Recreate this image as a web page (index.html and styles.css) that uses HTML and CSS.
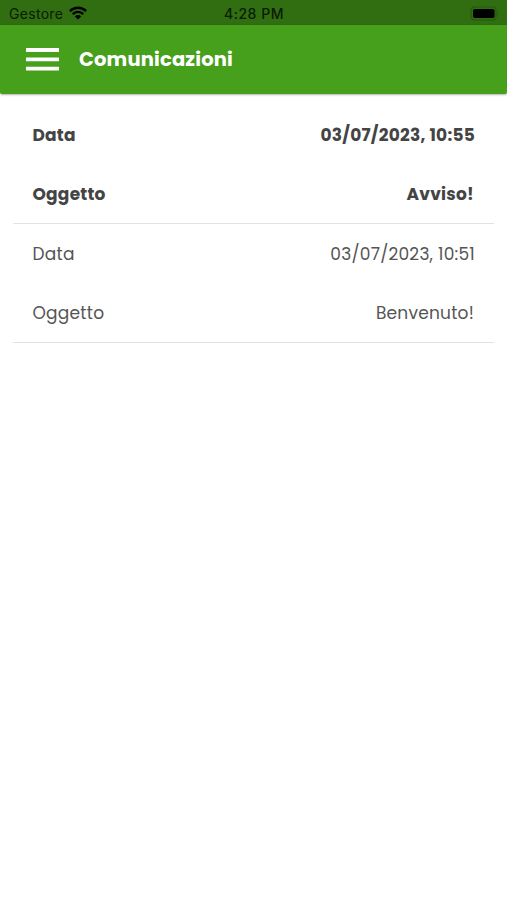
FILE: index.html
```html
<!DOCTYPE html>
<html lang="it">
<head>
<meta charset="utf-8">
<meta name="viewport" content="width=device-width, initial-scale=1">
<title>Comunicazioni</title>
<link rel="stylesheet" href="styles.css">
</head>
<body>
<div class="status-bar">
  <div class="carrier"><span class="carrier-name">Gestore</span>
    <svg class="wifi" viewBox="0 0 18 14" width="18" height="14" aria-hidden="true">
      <g fill="none" stroke="currentColor" stroke-width="2.3"><path d="M.9 5.1a11.5 11.5 0 0 1 16.2 0"/><path d="M3.7 8.1a7.5 7.5 0 0 1 10.6 0"/></g>
      <path d="M9 13.5 5.9 10.4a4.4 4.4 0 0 1 6.2 0z" fill="currentColor"/>
    </svg>
  </div>
  <div class="clock">4:28 PM</div>
  <svg class="battery" viewBox="0 0 29 15" width="29" height="15" aria-hidden="true">
    <rect x="1" y="1" width="25" height="13" rx="3.5" fill="none" stroke="#245a0d" stroke-width="1.2"/>
    <rect x="3" y="3" width="21.5" height="9" rx="1.8" fill="#000"/>
    <path d="M27.3 5.5q1.5 2 0 4z" fill="#245a0d"/>
  </svg>
</div>
<header class="app-bar">
  <svg class="menu" viewBox="0 0 33 23" width="33" height="23" aria-label="Menu"><path d="M0 2h33M0 11.3h33M0 20.6h33" stroke="#fff" stroke-width="3.8"/></svg>
  <h1 class="title">Comunicazioni</h1>
</header>
<main class="list">
  <section class="message unread">
    <div class="row"><span>Data</span><span>03/07/2023, 10:55</span></div>
    <div class="row"><span>Oggetto</span><span class="subject">Avviso!</span></div>
  </section>
  <section class="message">
    <div class="row"><span>Data</span><span>03/07/2023, 10:51</span></div>
    <div class="row"><span>Oggetto</span><span class="subject">Benvenuto!</span></div>
  </section>
</main>
</body>
</html>
```
FILE: styles.css
```css
* { box-sizing: border-box; }
body {
  margin: 0;
  min-height: 900px;
  background: #fff;
  color: #555;
  font-family: Poppins, Inter, "Open Sans", sans-serif;
}
.status-bar {
  height: 25px;
  padding: 1px 8px 0 9px;
  display: grid;
  grid-template-columns: 1fr auto 1fr;
  align-items: center;
  background: #306e11;
  color: #0b1b04;
  font-family: Inter, sans-serif;
  font-size: 14px;
  line-height: 24px;
}
.carrier { display: flex; align-items: center; gap: 6px; padding-top: 1px; }
.carrier-name { letter-spacing: .3px; }
.wifi { color: #000; margin-top: -2px; }
.clock { padding-top: 1px; font-weight: 500; letter-spacing: .5px; }
.battery { justify-self: end; }
.app-bar {
  height: 69px;
  padding: 1px 26px 2px;
  display: flex;
  align-items: center;
  gap: 20px;
  background: #46a01b;
  border-radius: 0 0 2px 2px;
  box-shadow: 0 1px 2px rgba(0, 0, 0, .3);
}
.title { margin: 0; padding-top: 2px; color: #fff; font-size: 19.5px; font-weight: 700; line-height: 28px; letter-spacing: .17px; }
.list { padding: 11px 13px 0; }
.message { height: 119px; padding: 0 19px 0 19.5px; border-bottom: 1px solid #e2e2e2; }
.row {
  height: 59px;
  display: flex;
  align-items: center;
  justify-content: space-between;
  font-size: 17px;
  line-height: 28px;
  letter-spacing: .23px;
}
.subject { margin-right: 1px; }
.unread { color: #444; font-weight: 700; }
```
